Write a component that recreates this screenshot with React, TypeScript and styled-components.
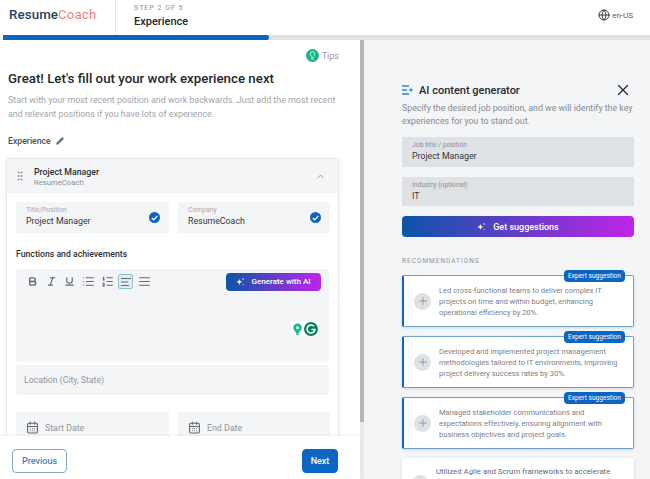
import styled, { createGlobalStyle } from "styled-components";
import {
  AlignJustify,
  AlignLeft,
  Bold,
  CalendarDays,
  ChevronUp,
  Globe,
  GripVertical,
  Italic,
  Lightbulb,
  List,
  ListOrdered,
  Pencil,
  Plus,
  Underline,
  X,
} from "lucide-react";

const GlobalStyle = createGlobalStyle`
  html, body {
    margin: 0;
    padding: 0;
    background: #ffffff;
  }
  * {
    box-sizing: border-box;
  }
  body {
    font-family: Roboto, "Liberation Sans", sans-serif;
    color: #23272b;
  }
`;

const Page = styled.div`
  width: 650px;
  height: 479px;
  display: flex;
  flex-direction: column;
  overflow: hidden;
`;

const Header = styled.header`
  height: 35px;
  display: flex;
  align-items: stretch;
  flex-shrink: 0;
`;

const LogoBox = styled.div`
  width: 116px;
  padding: 7px 0 0 9px;
  border-right: 1px solid #e4e6e8;
  font-size: 13.3px;
  font-weight: 500;
  letter-spacing: 0.1px;
  color: #1f4460;
  & span {
    color: #ee7f7f;
    font-weight: 400;
  }
`;

const StepBox = styled.div`
  flex: 1;
  padding: 3px 0 0 18px;
`;

const StepLabel = styled.div`
  font-size: 7px;
  line-height: 10px;
  letter-spacing: 1px;
  color: #8a9096;
`;

const StepTitle = styled.div`
  font-size: 11px;
  line-height: 15px;
  margin-top: 1px;
  font-weight: 500;
`;

const Lang = styled.div`
  display: flex;
  align-items: center;
  gap: 2px;
  padding: 0 17px 5px 0;
  font-size: 8px;
  color: #555b61;
`;

const Progress = styled.div`
  height: 5px;
  margin-left: 3px;
  background: #e0e3e5;
  flex-shrink: 0;
`;

const ProgressFill = styled.div`
  width: 266px;
  height: 100%;
  background: #0b66c3;
  border-radius: 0 2px 2px 0;
`;

const Body = styled.div`
  flex: 1;
  display: flex;
  min-height: 0;
`;

const LeftPanel = styled.section`
  width: 360px;
  display: flex;
  flex-direction: column;
  flex-shrink: 0;
`;

const LeftScroll = styled.div`
  flex: 1;
  min-height: 0;
  overflow: hidden;
  padding: 8px 21px 0 6px;
`;

const TipsRow = styled.div`
  display: flex;
  justify-content: flex-end;
  align-items: center;
  gap: 3px;
  height: 15px;
  font-size: 9px;
  color: #969ca2;
`;

const TipsBadge = styled.span`
  width: 13px;
  height: 13px;
  border-radius: 50%;
  background: #17b78a;
  display: flex;
  align-items: center;
  justify-content: center;
  color: #ffffff;
`;

const Heading = styled.h1`
  margin: 7px 0 0 2px;
  font-size: 13.3px;
  line-height: 18px;
  font-weight: 500;
  color: #24282c;
`;

const Intro = styled.p`
  margin: 5px 0 0 2px;
  font-size: 8.9px;
  line-height: 14px;
  color: #a0a5aa;
`;

const SectionLabel = styled.div`
  display: flex;
  align-items: center;
  gap: 5px;
  margin: 14px 0 0 2px;
  height: 12px;
  font-size: 8.7px;
  font-weight: 500;
  color: #4c5156;
`;

const Card = styled.div`
  margin-top: 11px;
  border: 1px solid #e6e8ea;
  border-bottom: 0;
  border-radius: 3px 3px 0 0;
  box-shadow: 0 0 4px rgba(30, 40, 50, 0.08);
`;

const CardHead = styled.div`
  height: 34px;
  display: flex;
  align-items: center;
  padding: 0 12px 0 7px;
  background: #f3f5f7;
  color: #8b9197;
`;

const CardHeadText = styled.div`
  flex: 1;
  margin-left: 8px;
  padding-top: 1px;
`;

const CardTitle = styled.div`
  font-size: 8.8px;
  line-height: 12px;
  font-weight: 500;
  color: #2b2f33;
`;

const CardSub = styled.div`
  font-size: 7.7px;
  line-height: 10px;
  color: #8e9499;
`;

const CardBody = styled.div`
  padding: 9px 9px 0;
`;

const FieldRow = styled.div`
  display: grid;
  grid-template-columns: 153px 152px;
  gap: 9px;
`;

const Field = styled.div`
  height: 31px;
  padding: 3px 10px 5px;
  background: #f3f5f7;
  display: flex;
  align-items: center;
  border-radius: 2px;
`;

const FieldText = styled.div`
  flex: 1;
`;

const FieldLabel = styled.div<{ $dark?: boolean }>`
  font-size: 6.8px;
  line-height: 9px;
  color: ${(p) => (p.$dark ? "#8b9096" : "#a6abb0")};
`;

const FieldValue = styled.div`
  font-size: 8.8px;
  line-height: 13px;
  color: #33383c;
`;

const CheckDot = styled.span`
  width: 11px;
  height: 11px;
  margin: 2px -1px 0 0;
  border-radius: 50%;
  background: #0b66c3;
  display: flex;
  align-items: center;
  justify-content: center;
`;

const SubHeading = styled.div`
  margin-top: 15px;
  font-size: 8.7px;
  line-height: 12px;
  font-weight: 500;
  color: #2c3034;
`;

const Editor = styled.div`
  margin-top: 9px;
  background: #f3f5f7;
  border-radius: 2px;
`;

const Toolbar = styled.div`
  height: 26px;
  display: flex;
  align-items: center;
  padding: 0 8px 0 9px;
  border-bottom: 1px solid #eff1f3;
  color: #63686d;
`;

const ToolButton = styled.span<{ $active?: boolean }>`
  width: 15px;
  height: 15px;
  margin-right: 3.7px;
  display: flex;
  align-items: center;
  justify-content: center;
  border-radius: 2px;
  border: 1px solid ${(p) => (p.$active ? "#8fc1d6" : "transparent")};
  background: ${(p) => (p.$active ? "#e3edf1" : "transparent")};
`;

const GenerateButton = styled.button`
  margin-left: auto;
  width: 95px;
  height: 18px;
  border: 0;
  border-radius: 4px;
  display: flex;
  align-items: center;
  justify-content: center;
  gap: 6px;
  background: linear-gradient(90deg, #0b55a8, #c024e8);
  color: #ffffff;
  font-family: inherit;
  font-size: 8px;
  font-weight: 500;
`;

const EditorArea = styled.div`
  height: 67px;
  display: flex;
  justify-content: flex-end;
  padding: 26px 10px 0 0;
`;

const GrammarlyBox = styled.div`
  width: 28px;
  height: 15px;
  padding: 0 1px;
  display: flex;
  align-items: center;
  justify-content: space-between;
  background: #ffffff;
  border-radius: 3px;
`;

const WideField = styled.div`
  height: 30px;
  margin-top: 3px;
  padding-left: 8px;
  display: flex;
  align-items: center;
  background: #f3f5f7;
  border-radius: 2px;
  font-size: 8.7px;
  color: #92979c;
`;

const DateRow = styled(FieldRow)`
  margin-top: 17px;
`;

const DateField = styled.div`
  height: 31px;
  padding-left: 10px;
  display: flex;
  align-items: center;
  gap: 6px;
  background: #f3f5f7;
  font-size: 8.8px;
  color: #92979c;
  & svg {
    color: #63686d;
  }
`;

const Footer = styled.footer`
  height: 43px;
  flex-shrink: 0;
  display: flex;
  align-items: flex-start;
  justify-content: space-between;
  padding: 13px 22px 0 12px;
  background: #ffffff;
  box-shadow: 0 -1px 2px rgba(30, 40, 50, 0.06);
  position: relative;
`;

const FooterButton = styled.button<{ $primary?: boolean }>`
  height: 24px;
  padding: 0;
  width: ${(p) => (p.$primary ? "36px" : "55px")};
  border-radius: 4px;
  border: 1px solid ${(p) => (p.$primary ? "#0b66c3" : "#7fa9bd")};
  background: ${(p) => (p.$primary ? "#0b66c3" : "#ffffff")};
  color: ${(p) => (p.$primary ? "#ffffff" : "#3a86bd")};
  font-family: inherit;
  font-size: 9px;
  font-weight: 500;
`;

const ScrollTrack = styled.div`
  width: 4px;
  flex-shrink: 0;
  background: #e6e8ea;
`;

const ScrollThumb = styled.div`
  height: 382px;
  background: #b3b5b7;
`;

const RightPanel = styled.aside`
  flex: 1;
  background: #f3f5f7;
  padding: 43px 16px 0 38px;
  overflow: hidden;
`;

const AiTitleRow = styled.div`
  display: flex;
  align-items: center;
  height: 14px;
  gap: 5px;
  font-size: 11px;
  font-weight: 500;
  color: #272b2f;
`;

const CloseIcon = styled(X)`
  margin-left: auto;
  margin-right: 2px;
  color: #2a2e32;
`;

const AiIntro = styled.p`
  margin: 5px 0 0;
  width: 236px;
  font-size: 8.8px;
  line-height: 13px;
  color: #868c92;
`;

const AiField = styled.div<{ $h: number }>`
  height: ${(p) => p.$h}px;
  margin-top: 9px;
  padding: 4px 10px 0;
  background: #dfe2e5;
  & + & {
    margin-top: 10px;
  }
`;

const SuggestButton = styled.button`
  width: 100%;
  height: 21px;
  margin-top: 10px;
  border: 0;
  border-radius: 4px;
  display: flex;
  align-items: center;
  justify-content: center;
  gap: 7px;
  background: linear-gradient(90deg, #0b55a8, #c024e8);
  color: #ffffff;
  font-family: inherit;
  font-size: 9px;
  font-weight: 500;
`;

const RecLabel = styled.div`
  margin-top: 20px;
  font-size: 6.5px;
  line-height: 9px;
  letter-spacing: 1px;
  color: #8e9499;
`;

const RecList = styled.div`
  margin-top: 9px;
  display: flex;
  flex-direction: column;
  gap: 9px;
`;

const RecCard = styled.div<{ $plain?: boolean }>`
  position: relative;
  height: ${(p) => (p.$plain ? "60px" : "52px")};
  display: flex;
  align-items: ${(p) => (p.$plain ? "flex-start" : "center")};
  gap: ${(p) => (p.$plain ? "7px" : "8px")};
  padding: ${(p) => (p.$plain ? "8px 10px 0 10px" : "0 8px 0 10px")};
  background: #ffffff;
  border-radius: 2px;
  border: ${(p) => (p.$plain ? "0" : "1px solid #6fa3c4")};
  border-left: ${(p) => (p.$plain ? "0" : "2px solid #0b66c3")};
  box-shadow: 0 1px 3px rgba(30, 50, 70, 0.15);
`;

const ExpertBadge = styled.span`
  position: absolute;
  top: -6px;
  right: 8px;
  height: 12px;
  padding: 0 4px;
  border-radius: 4px;
  background: #0b66c3;
  color: #ffffff;
  font-size: 6.6px;
  line-height: 12px;
`;

const PlusCircle = styled.span<{ $low?: boolean }>`
  width: 17px;
  height: 17px;
  margin-top: ${(p) => (p.$low ? "9px" : "0")};
  flex-shrink: 0;
  border-radius: 50%;
  background: #dfe2e5;
  color: #73787d;
  display: flex;
  align-items: center;
  justify-content: center;
`;

const RecText = styled.div<{ $plain?: boolean }>`
  font-size: ${(p) => (p.$plain ? "7.8px" : "7.55px")};
  line-height: 11px;
  color: ${(p) => (p.$plain ? "#666b70" : "#7b8086")};
`;

function Sparkle({ size = 9 }: { size?: number }) {
  return (
    <svg width={size} height={size} viewBox="0 0 12 12" fill="#ffffff">
      <path d="M4.5 2.5 5.6 5.4 8.5 6.5 5.6 7.6 4.5 10.5 3.4 7.6.5 6.5 3.4 5.4Z" />
      <circle cx="9.5" cy="2.5" r="1" />
      <circle cx="9.5" cy="10" r="0.8" />
    </svg>
  );
}

function AiIcon() {
  return (
    <svg width="12" height="10" viewBox="0 0 12 10" fill="none">
      <path d="M0 1h7M0 5h5M0 9h7" stroke="#2f86c8" strokeWidth="1.4" />
      <path d="M9 2.5 9.7 4.3 11.5 5 9.7 5.7 9 7.5 8.3 5.7 6.5 5 8.3 4.3Z" fill="#2f86c8" />
    </svg>
  );
}

function GrammarlyIcons() {
  return (
    <GrammarlyBox>
      <svg width="11" height="14" viewBox="0 0 12 14">
        <path
          d="M6 1a4.6 4.6 0 0 1 4.6 4.6c0 2-1.4 3-2.2 4.2L7.4 11.5H4.6L3.6 9.8C2.8 8.6 1.4 7.6 1.4 5.6A4.6 4.6 0 0 1 6 1Z"
          fill="#17b78a"
        />
        <rect x="4.5" y="12" width="3" height="1.5" fill="#17b78a" />
        <circle cx="6" cy="5.6" r="1.7" fill="#ffffff" />
      </svg>
      <svg width="14" height="14" viewBox="0 0 14 14">
        <circle cx="7" cy="7" r="7" fill="#0b7f62" />
        <path d="M10 4.3A4 4 0 1 0 11 7.5H7.5" fill="none" stroke="#ffffff" strokeWidth="1.5" />
      </svg>
    </GrammarlyBox>
  );
}

function CheckBadge() {
  return (
    <CheckDot>
      <svg width="7" height="6" viewBox="0 0 7 6" fill="none">
        <path d="M.8 3 2.7 4.8 6.2 1" stroke="#ffffff" strokeWidth="1.2" />
      </svg>
    </CheckDot>
  );
}

const recommendations = [
  "Led cross-functional teams to deliver complex IT projects on time and within budget, enhancing operational efficiency by 20%.",
  "Developed and implemented project management methodologies tailored to IT environments, improving project delivery success rates by 30%.",
  "Managed stakeholder communications and expectations effectively, ensuring alignment with business objectives and project goals.",
];

export default function App() {
  return (
    <Page>
      <GlobalStyle />
      <Header>
        <LogoBox>
          Resume<span>Coach</span>
        </LogoBox>
        <StepBox>
          <StepLabel>STEP 2 OF 5</StepLabel>
          <StepTitle>Experience</StepTitle>
        </StepBox>
        <Lang>
          <Globe size={12} color="#3a3f44" />
          en-US
        </Lang>
      </Header>
      <Progress>
        <ProgressFill />
      </Progress>
      <Body>
        <LeftPanel>
          <LeftScroll>
            <TipsRow>
              <TipsBadge>
                <Lightbulb size={9} />
              </TipsBadge>
              Tips
            </TipsRow>
            <Heading>Great! Let's fill out your work experience next</Heading>
            <Intro>
              Start with your most recent position and work backwards. Just add the most recent
              and relevant positions if you have lots of experience.
            </Intro>
            <SectionLabel>
              Experience
              <Pencil size={8} color="#63686d" fill="#63686d" />
            </SectionLabel>
            <Card>
              <CardHead>
                <GripVertical size={12} />
                <CardHeadText>
                  <CardTitle>Project Manager</CardTitle>
                  <CardSub>ResumeCoach</CardSub>
                </CardHeadText>
                <ChevronUp size={11} />
              </CardHead>
              <CardBody>
                <FieldRow>
                  <Field>
                    <FieldText>
                      <FieldLabel>Title/Position</FieldLabel>
                      <FieldValue>Project Manager</FieldValue>
                    </FieldText>
                    <CheckBadge />
                  </Field>
                  <Field>
                    <FieldText>
                      <FieldLabel>Company</FieldLabel>
                      <FieldValue>ResumeCoach</FieldValue>
                    </FieldText>
                    <CheckBadge />
                  </Field>
                </FieldRow>
                <SubHeading>Functions and achievements</SubHeading>
                <Editor>
                  <Toolbar>
                    <ToolButton>
                      <Bold size={11} strokeWidth={3} />
                    </ToolButton>
                    <ToolButton>
                      <Italic size={11} strokeWidth={2.5} />
                    </ToolButton>
                    <ToolButton>
                      <Underline size={11} strokeWidth={2.5} />
                    </ToolButton>
                    <ToolButton>
                      <List size={13} />
                    </ToolButton>
                    <ToolButton>
                      <ListOrdered size={13} />
                    </ToolButton>
                    <ToolButton $active>
                      <AlignLeft size={12} />
                    </ToolButton>
                    <ToolButton>
                      <AlignJustify size={13} />
                    </ToolButton>
                    <GenerateButton>
                      <Sparkle />
                      Generate with AI
                    </GenerateButton>
                  </Toolbar>
                  <EditorArea>
                    <GrammarlyIcons />
                  </EditorArea>
                </Editor>
                <WideField>Location (City, State)</WideField>
                <DateRow>
                  <DateField>
                    <CalendarDays size={13} />
                    Start Date
                  </DateField>
                  <DateField>
                    <CalendarDays size={13} />
                    End Date
                  </DateField>
                </DateRow>
              </CardBody>
            </Card>
          </LeftScroll>
          <Footer>
            <FooterButton>Previous</FooterButton>
            <FooterButton $primary>Next</FooterButton>
          </Footer>
        </LeftPanel>
        <ScrollTrack>
          <ScrollThumb />
        </ScrollTrack>
        <RightPanel>
          <AiTitleRow>
            <AiIcon />
            AI content generator
            <CloseIcon size={18} strokeWidth={1.8} />
          </AiTitleRow>
          <AiIntro>
            Specify the desired job position, and we will identify the key experiences for you to
            stand out.
          </AiIntro>
          <AiField $h={30}>
            <FieldLabel $dark>Job title / position</FieldLabel>
            <FieldValue>Project Manager</FieldValue>
          </AiField>
          <AiField $h={29}>
            <FieldLabel $dark>Industry (optional)</FieldLabel>
            <FieldValue>IT</FieldValue>
          </AiField>
          <SuggestButton>
            <Sparkle />
            Get suggestions
          </SuggestButton>
          <RecLabel>RECOMMENDATIONS</RecLabel>
          <RecList>
            {recommendations.map((text) => (
              <RecCard key={text}>
                <ExpertBadge>Expert suggestion</ExpertBadge>
                <PlusCircle>
                  <Plus size={12} strokeWidth={1.3} />
                </PlusCircle>
                <RecText>{text}</RecText>
              </RecCard>
            ))}
            <RecCard $plain>
              <PlusCircle $low>
                <Plus size={12} strokeWidth={1.3} />
              </PlusCircle>
              <RecText $plain>Utilized Agile and Scrum frameworks to accelerate</RecText>
            </RecCard>
          </RecList>
        </RightPanel>
      </Body>
    </Page>
  );
}
